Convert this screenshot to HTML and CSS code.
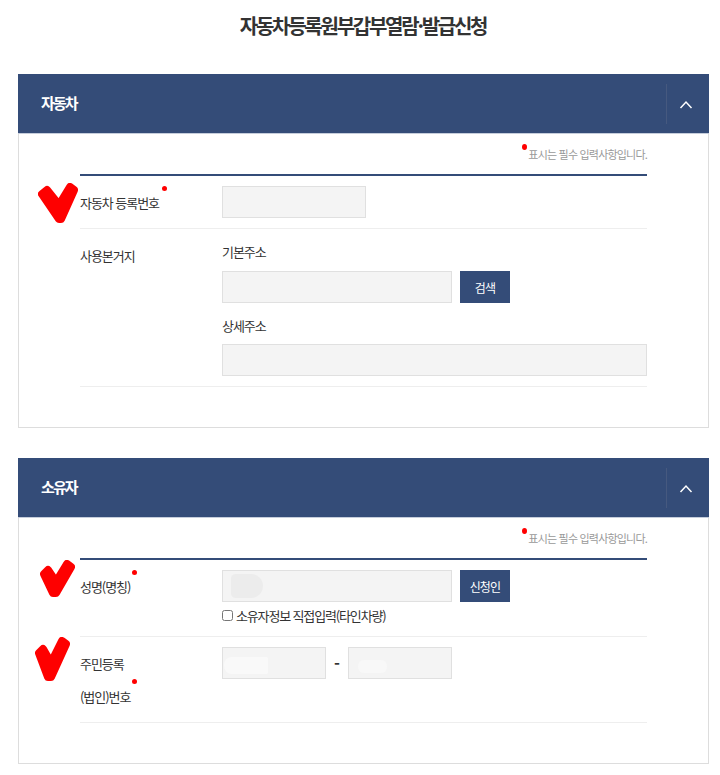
FILE: index.html
```html
<!DOCTYPE html>
<html lang="ko">
<head>
<meta charset="utf-8">
<title>자동차등록원부갑부열람·발급신청</title>
<link rel="stylesheet" href="styles.css">
</head>
<body>
<h1 class="title">자동차등록원부갑부열람·발급신청</h1>

<section class="card card-car">
  <header class="card-head">
    <h2>자동차</h2>
    <button class="toggle" type="button" aria-label="접기">
      <svg width="14" height="9" viewBox="0 0 14 9"><path d="M1.500 8 7 2l5.500 6" fill="none" stroke="#fff" stroke-width="1.500"/></svg>
    </button>
  </header>
  <div class="card-body">
    <p class="note"><i class="dot dot-note"></i>표시는 필수 입력사항입니다.</p>
    <div class="rows">
      <div class="row row-reg">
        <div class="label"><span class="req">자동차 등록번호<i class="dot"></i></span></div>
        <div class="field"><input class="input w144" type="text"></div>
      </div>
      <div class="row row-addr">
        <div class="label label-addr">사용본거지</div>
        <div class="field">
          <div class="sub first">기본주소</div>
          <div class="inline"><input class="input w230" type="text"><button class="btn" type="button">검색</button></div>
          <div class="sub second">상세주소</div>
          <input class="input full" type="text">
        </div>
      </div>
    </div>
  </div>
  <svg class="check check-a" width="50" height="48" viewBox="0 0 50 48"><path d="M10 16 15 12 27 27 38 9 42 12 29 41 27 41Z" fill="#fe0000" stroke="#fe0000" stroke-width="8" stroke-linejoin="round"/></svg>
</section>

<section class="card card-owner">
  <header class="card-head">
    <h2>소유자</h2>
    <button class="toggle" type="button" aria-label="접기">
      <svg width="14" height="9" viewBox="0 0 14 9"><path d="M1.500 8 7 2l5.500 6" fill="none" stroke="#fff" stroke-width="1.500"/></svg>
    </button>
  </header>
  <div class="card-body">
    <p class="note"><i class="dot dot-note"></i>표시는 필수 입력사항입니다.</p>
    <div class="rows">
      <div class="row row-name">
        <div class="label"><span class="req">성명(명칭)<i class="dot"></i></span></div>
        <div class="field">
          <div class="inline"><input class="input w230" type="text"><button class="btn" type="button">신청인</button></div>
          <label class="direct"><input class="chk" type="checkbox">소유자정보 직접입력(타인차량)</label>
        </div>
      </div>
      <div class="row row-id">
        <div class="label label-id"><span>주민등록</span><span class="req">(법인)번호<i class="dot"></i></span></div>
        <div class="field id-fields">
          <input class="input w104" type="text"><span class="dash">-</span><input class="input w104" type="text">
        </div>
      </div>
    </div>
  </div>
  <span class="blur blur-name"></span>
  <span class="blur blur-id1"></span>
  <span class="blur blur-id2"></span>
  <svg class="check check-b" width="40" height="42" viewBox="0 0 40 42"><path d="M8 15 12 11 20 23 31 5 35 8 20 34 17 34Z" fill="#fe0000" stroke="#fe0000" stroke-width="8" stroke-linejoin="round"/></svg>
  <svg class="check check-c" width="40" height="50" viewBox="0 0 40 50"><path d="M7 18 11 14 19 28 30 6 34 9 19 42 16 42Z" fill="#fe0000" stroke="#fe0000" stroke-width="8" stroke-linejoin="round"/></svg>
</section>
</body>
</html>
```

FILE: styles.css
```css
* { box-sizing: border-box; }
html, body { margin: 0; padding: 0; background: #fff; }
body {
  font-family: "Noto Sans CJK KR", "Noto Sans", sans-serif;
  color: #333;
  font-size: 13px;
  overflow: hidden;
  height: 775px;
}
.title {
  margin: 0;
  height: 74px;
  padding: 9px 0 0 6px;
  font-size: 20px;
  line-height: 34px;
  font-weight: 700;
  letter-spacing: -2.25px;
  text-align: center;
  color: #333;
}
.card {
  position: relative;
  margin: 0 11px 30px 18px;
  border: 1px solid #ddd;
  border-top: 0;
  background: #fff;
}
.card-car { height: 354px; }
.card-owner { height: 306px; margin-bottom: 0; }
.card-head {
  margin: 0 -1px;
  height: 60px;
  background: #344c78;
  border-bottom: 1px solid #c5cddb;
  display: flex;
  align-items: center;
  justify-content: space-between;
  padding-left: 23px;
}
.card-head h2 {
  margin: 0 0 2px;
  font-size: 15px;
  font-weight: 700;
  letter-spacing: -1.9px;
  color: #fff;
}
.toggle {
  width: 43px;
  height: 40px;
  padding: 2px 4px 0 0;
  border: 0;
  border-left: 1px solid #46597f;
  background: transparent;
  display: flex;
  align-items: center;
  justify-content: center;
}
.card-body { padding: 0 61px 0 61px; }
.note {
  margin: 0;
  height: 40px;
  padding-top: 10px;
  text-align: right;
  font-size: 11px;
  line-height: 20px;
  letter-spacing: -0.8px;
  color: #999;
  position: relative;
}
.dot {
  position: absolute;
  width: 5px;
  height: 5px;
  border-radius: 50%;
  background: #f00;
}
.dot-note { left: 442px; top: 10px; height: 6px; }
.req { position: relative; display: inline-block; }
.rows { border-top: 2px solid #344c78; width: 567px; }
.row {
  display: flex;
  border-bottom: 1px solid #eee;
}
.label {
  width: 142px;
  flex: none;
  font-size: 13px;
  line-height: 20px;
  letter-spacing: -1.05px;
  color: #333;
}
.field { flex: 1; min-width: 0; }
.input {
  display: block;
  height: 32px;
  padding: 0 8px;
  margin: 0;
  border: 1px solid #e0e0e0;
  background: #f4f4f4;
  border-radius: 0;
}
.w144 { width: 144px; }
.w230 { width: 230px; }
.w104 { width: 104px; }
.full { width: 425px; }
.inline { display: flex; gap: 8px; }
.btn {
  width: 50px;
  height: 32px;
  padding: 0;
  border: 0;
  background: #344c78;
  color: #fff;
  font-family: inherit;
  font-size: 12px;
  letter-spacing: -0.8px;
}
.row-reg { height: 53px; padding-top: 10px; }
.row-reg .label { padding-top: 7px; }
.row-reg .req .dot { top: -7px; right: -8px; }
.row-addr { height: 158px; }
.label-addr { padding-top: 17px; }
.sub {
  font-size: 13px;
  line-height: 20px;
  letter-spacing: -1.05px;
  color: #333;
}
.sub.first { padding-top: 13px; height: 42px; }
.sub.second { padding-top: 13px; height: 41px; }
.row-name { height: 77px; padding-top: 10px; }
.row-name .label { padding-top: 7px; }
.row-name .req .dot { top: -7px; right: -7px; }
.direct {
  display: flex;
  align-items: center;
  height: 20px;
  margin-top: 3px;
  font-size: 13px;
  letter-spacing: -1.15px;
  color: #333;
}
.chk {
  width: 11px;
  height: 13px;
  margin: 0 3px 0 0;
}
.row-id { height: 86px; padding-top: 10px; }
.label-id {
  display: flex;
  flex-direction: column;
  align-items: flex-start;
  gap: 13px;
  padding-top: 7px;
}
.label-id .req .dot { top: -8px; right: -7px; }
.id-fields { display: flex; align-items: flex-start; }
.dash {
  width: 22px;
  text-align: center;
  line-height: 32px;
  font-weight: 700;
  font-size: 16px;
}
.check { position: absolute; filter: blur(0.6px); }
.check-a { left: 13px; top: 104px; }
.check-b { left: 17px; top: 101px; }
.check-c { left: 13px; top: 177px; }
.blur { position: absolute; display: block; }
.blur-name { left: 212px; top: 116px; width: 32px; height: 24px; background: #ececec; border-radius: 5px 13px 13px 5px; }
.blur-id1 { left: 205px; top: 199px; width: 44px; height: 17px; background: #f9f9f9; border-radius: 8px 2px 2px 8px; }
.blur-id2 { left: 339px; top: 202px; width: 29px; height: 13px; background: #f8f8f8; border-radius: 6px; }
```
